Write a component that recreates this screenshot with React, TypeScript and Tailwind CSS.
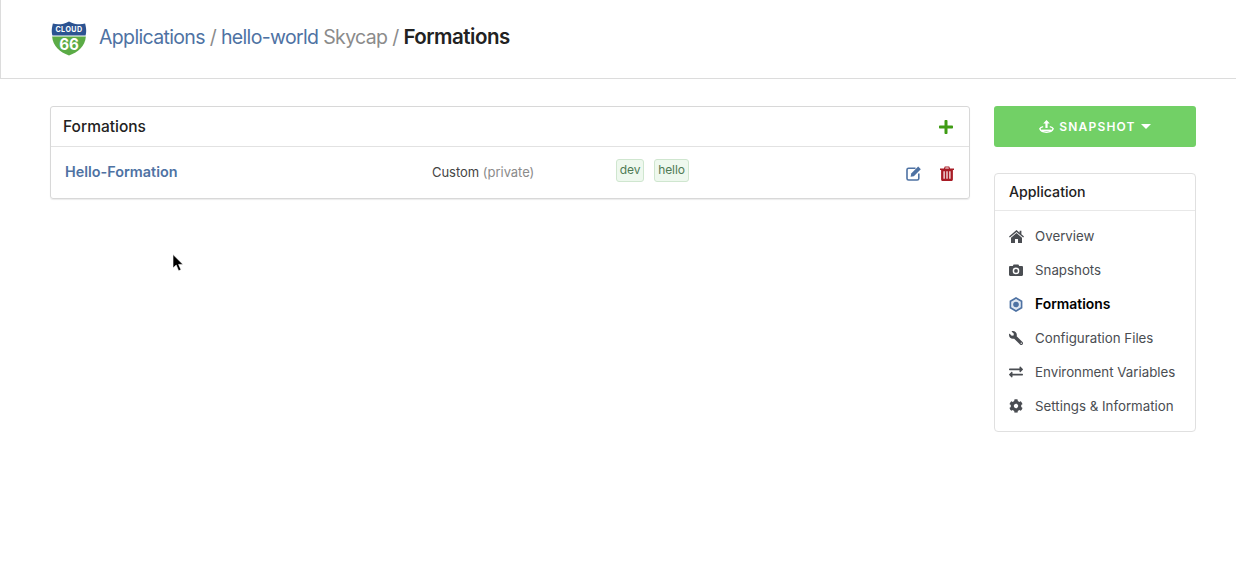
import { FaCog, FaExchangeAlt, FaPlus, FaWrench } from "react-icons/fa";

function Logo() {
  return (
    <svg width="36" height="36" viewBox="0 0 38 36" preserveAspectRatio="none" className="shrink-0">
      <path d="M2 3.5C7 5 13 4.5 19 1.5C25 4.5 31 5 36 3.5C37.5 9 37.5 12 36.5 15.5H1.5C0.5 12 0.5 9 2 3.5Z" fill="#2c5391" />
      <path d="M1.2 16.5H36.8C36 26 29 32 19 35.5C9 32 2 26 1.2 16.5Z" fill="#5bab46" />
      <text x="19" y="12.5" textAnchor="middle" fontSize="7.5" fontWeight="700" fill="#fff" fontFamily="Inter, sans-serif" letterSpacing="0.5">
        CLOUD
      </text>
      <text x="19" y="30" textAnchor="middle" fontSize="16" fontWeight="700" fill="#fff" fontFamily="Inter, sans-serif">
        66
      </text>
    </svg>
  );
}

function SnapshotIcon() {
  return (
    <svg width="15" height="13" viewBox="0 0 15 13" fill="none" className="shrink-0">
      <path d="M7.5 0L10.8 3.4H8.6V8H6.4V3.4H4.2Z" fill="#fff" />
      <path d="M4.2 6.6C2.4 7 1.2 7.7 0.8 8.8C1.6 10.8 4 12.2 7.5 12.2C11 12.2 13.4 10.8 14.2 8.8C13.8 7.7 12.6 7 10.8 6.6" stroke="#fff" strokeWidth="1.4" />
      <path d="M2.5 9.6H12.5V11H2.5Z" fill="#fff" />
    </svg>
  );
}

function HexIcon() {
  return (
    <svg width="14" height="15" viewBox="0 0 14 15" className="shrink-0">
      <path d="M7 1L12.6 4.25V10.75L7 14L1.4 10.75V4.25Z" fill="#dfe7f1" stroke="#4e72a3" strokeWidth="1.6" />
      <circle cx="7" cy="7.5" r="2.8" fill="#4e72a3" />
    </svg>
  );
}

function HomeIcon() {
  return (
    <svg width="15" height="13" viewBox="0 0 15 13" fill="currentColor" className="shrink-0">
      <path d="M7.5 0L10.6 2.7V0.8H12.4V4.3L15 6.6L14.2 7.6L7.5 1.9L0.8 7.6L0 6.6Z" />
      <path d="M7.5 3.1L13 7.8V13H9V9H6V13H2V7.8Z" />
    </svg>
  );
}

function CameraIcon() {
  return (
    <svg width="14" height="12" viewBox="0 0 14 12" className="shrink-0">
      <path
        fill="currentColor"
        fillRule="evenodd"
        d="M1.2 2H3.8L4.6 0.4H9.4L10.2 2H12.8C13.5 2 14 2.5 14 3.2V10.8C14 11.5 13.5 12 12.8 12H1.2C0.5 12 0 11.5 0 10.8V3.2C0 2.5 0.5 2 1.2 2ZM7 3.6A3.3 3.3 0 1 0 7 10.2A3.3 3.3 0 1 0 7 3.6Z"
      />
      <circle cx="7" cy="6.9" r="1.9" fill="currentColor" />
    </svg>
  );
}

function EditIcon() {
  return (
    <svg width="17" height="15" viewBox="0 0 17 15" fill="none" className="shrink-0 text-[#4e72a3]">
      <path d="M9.5 2.2H2.6C1.7 2.2 1 2.9 1 3.8V12.4C1 13.3 1.7 14 2.6 14H11.2C12.1 14 12.8 13.3 12.8 12.4V7.6" stroke="currentColor" strokeWidth="1.6" />
      <path d="M5.2 7.6L12.2 0.6L14.8 3.2L7.8 10.2L4.6 10.8Z" fill="currentColor" />
    </svg>
  );
}

function TrashIcon() {
  return (
    <svg width="14" height="15" viewBox="0 0 14 15" className="shrink-0 text-[#a81c26]">
      <path
        fill="currentColor"
        fillRule="evenodd"
        d="M0 2.6H3.9L4.8 0.5H9.2L10.1 2.6H14V4H12.9V13.2C12.9 14.2 12.3 15 11.5 15H2.5C1.7 15 1.1 14.2 1.1 13.2V4H0ZM5.5 1.6L5.1 2.6H8.9L8.5 1.6ZM3.5 5.2V12.8H4.7V5.2ZM6.4 5.2V12.8H7.6V5.2ZM9.3 5.2V12.8H10.5V5.2Z"
      />
    </svg>
  );
}

const navItems = [
  { label: "Overview", icon: <HomeIcon /> },
  { label: "Snapshots", icon: <CameraIcon /> },
  { label: "Formations", icon: <HexIcon />, active: true },
  { label: "Configuration Files", icon: <FaWrench size={14} className="-scale-x-100" /> },
  { label: "Environment Variables", icon: <FaExchangeAlt size={14} /> },
  { label: "Settings & Information", icon: <FaCog size={14} /> },
];

export default function App() {
  return (
    <div className="relative min-h-[572px] bg-white font-['Inter',sans-serif] text-[#333]">
      <header className="h-[79px] flex items-center gap-3 pl-[50px] border-l border-b border-[#dcdcdc] pb-[3px]">
        <Logo />
        <h1 className="text-[19.5px] leading-7 tracking-[-0.65px] text-[#8b8b8b] whitespace-nowrap pb-[1px]">
          <a className="text-[#4e72a3]">Applications</a> / <a className="text-[#4e72a3]">hello-world</a>{" "}
          <span>Skycap</span> / <strong className="text-[20.5px] tracking-[-0.5px] font-semibold text-[#222]">Formations</strong>
        </h1>
      </header>

      <main className="flex items-start gap-6 pt-[27px] pl-[50px] pr-10">
        <section className="w-[920px] border border-[#d8d8d8] rounded-[3px] shadow-[0_1px_1px_rgba(0,0,0,0.08)]">
          <div className="h-[40px] flex items-center justify-between pl-3 pr-[15px] border-b border-[#e2e2e2]">
            <h2 className="text-[15.5px] font-medium text-[#222]">Formations</h2>
            <FaPlus size={16} className="text-[#3f9c14]" />
          </div>
          <div className="h-[51px] flex items-center pl-[14px] pr-[15px]">
            <a className="w-[367px] text-[14.4px] font-semibold text-[#4e72a3] pb-[2px]">Hello-Formation</a>
            <span className="w-[184px] text-[13px] tracking-[-0.03px] text-[#444]">
              Custom <span className="text-[#8b8b8b]">(private)</span>
            </span>
            <div className="flex gap-[10px] pb-[5px]">
              <span className="h-[23px] w-[28px] flex items-center justify-center border border-[#cfe6cf] rounded-[3px] bg-[#eef8ee] text-[12px] tracking-[-0.1px] text-[#4f7a54]">dev</span>
              <span className="h-[23px] w-[35px] flex items-center justify-center border border-[#cfe6cf] rounded-[3px] bg-[#eef8ee] text-[12px] tracking-[-0.1px] text-[#4f7a54]">hello</span>
            </div>
            <div className="ml-auto flex items-center gap-[17px] pt-[2px]">
              <EditIcon />
              <TrashIcon />
            </div>
          </div>
        </section>

        <aside className="w-[202px] shrink-0">
          <button className="w-full h-[41px] flex items-center justify-center gap-[5px] rounded-[3px] bg-[#72d066] text-white text-[12px] font-semibold tracking-[1.2px]">
            <SnapshotIcon />
            SNAPSHOT
            <span className="border-x-[5px] border-t-[5px] border-x-transparent border-t-white" />
          </button>

          <nav className="mt-[26px] border border-[#e0e0e0] rounded-[4px]">
            <div className="h-[37px] flex items-center pl-[14px] pb-[1px] border-b border-[#e8e8e8] text-[14.2px] font-medium text-[#222]">
              Application
            </div>
            <ul className="py-2">
              {navItems.map((item) => (
                <li key={item.label} className="h-[34px] flex items-center pl-[14px]">
                  <span className="w-[26px] flex justify-start text-[#4a4d52]">{item.icon}</span>
                  <span className={item.active ? "text-[13.9px] font-semibold text-black" : "text-[13.3px] pt-[1px] text-[#4a4d52]"}>
                    {item.label}
                  </span>
                </li>
              ))}
            </ul>
          </nav>
        </aside>
      </main>

      {/* mouse pointer caught in the capture */}
      <svg width="12" height="18" viewBox="0 0 12 18" className="absolute left-[172px] top-[254px]">
        <path d="M1 0.5V14L4.2 11L6.6 16.8L9 15.8L6.6 10.4H11Z" fill="#000" stroke="#fff" strokeWidth="0.6" />
      </svg>
    </div>
  );
}
